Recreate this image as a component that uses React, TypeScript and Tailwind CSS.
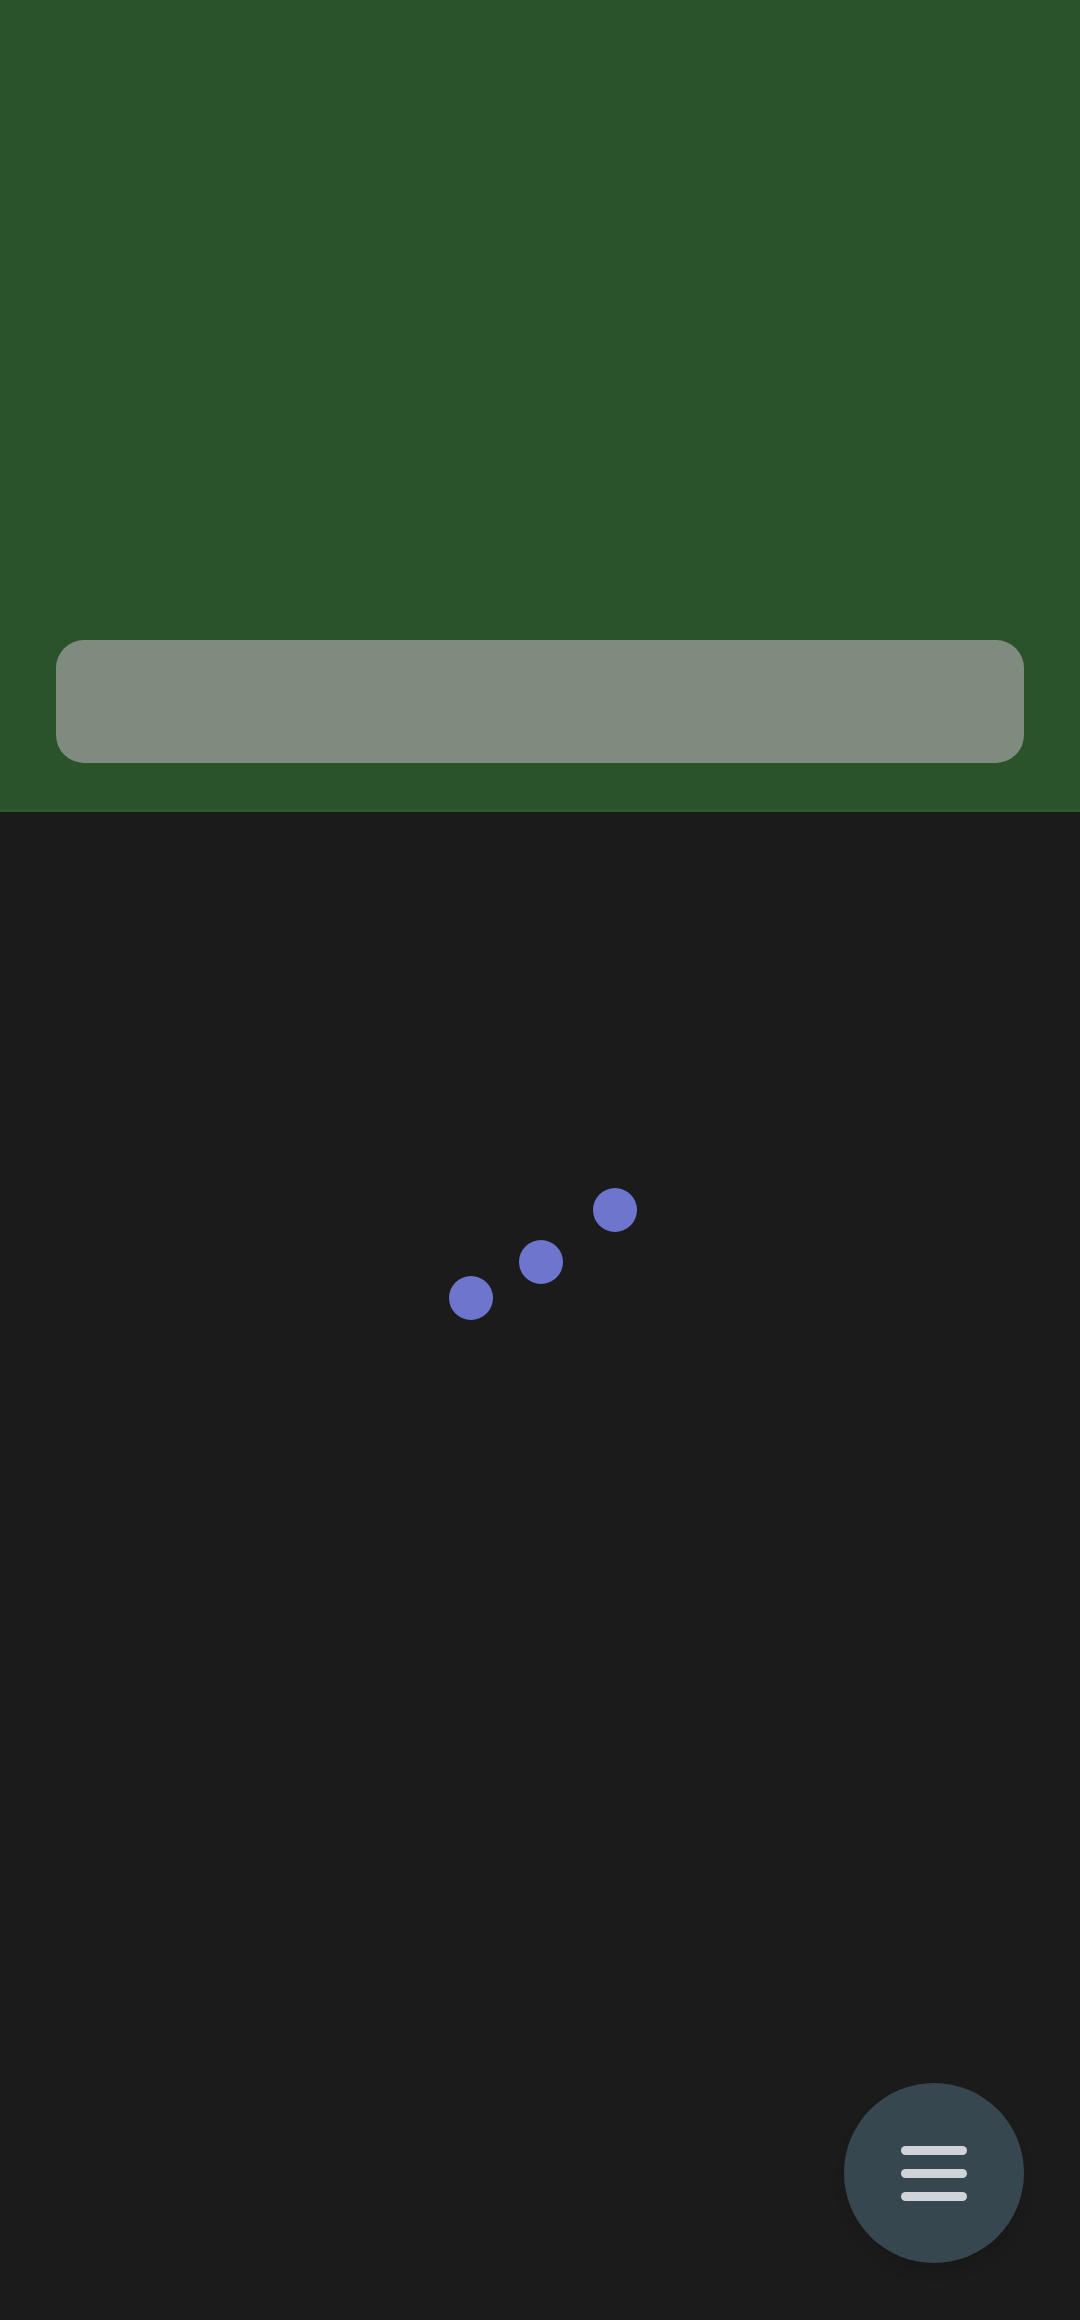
export default function App() {
  return (
    <div className="min-h-[2320px] w-full flex flex-col bg-[#1b1b1b] font-['Roboto',sans-serif]">
      {/* header with search bar */}
      <div className="h-[812px] bg-[#2a5329] flex flex-col justify-end px-[56px] pb-[46px] border-b-[3px] border-[#2d5a2b]">
        <div className="h-[123px] w-full rounded-[28px] bg-[#7f8b7f]" />
      </div>

      {/* content / loading */}
      <div className="relative flex-1 bg-[#1b1b1b]">
        <div className="absolute left-[449px] top-[376px] w-[188px] h-[132px]">
          <div className="absolute left-[144px] top-0 w-[44px] h-[44px] rounded-full bg-[#6d76cc]" />
          <div className="absolute left-[70px] top-[52px] w-[44px] h-[44px] rounded-full bg-[#6d76cc]" />
          <div className="absolute left-0 top-[88px] w-[44px] h-[44px] rounded-full bg-[#6d76cc]" />
        </div>
      </div>

      {/* menu button */}
      <button className="fixed right-[56px] bottom-[57px] w-[180px] h-[180px] rounded-full bg-[#37474f] shadow-lg flex flex-col items-center justify-center gap-[14px]">
        <span className="block w-[66px] h-[9px] rounded-full bg-[#d0d4d8]" />
        <span className="block w-[66px] h-[9px] rounded-full bg-[#d0d4d8]" />
        <span className="block w-[66px] h-[9px] rounded-full bg-[#d0d4d8]" />
      </button>
    </div>
  );
}
